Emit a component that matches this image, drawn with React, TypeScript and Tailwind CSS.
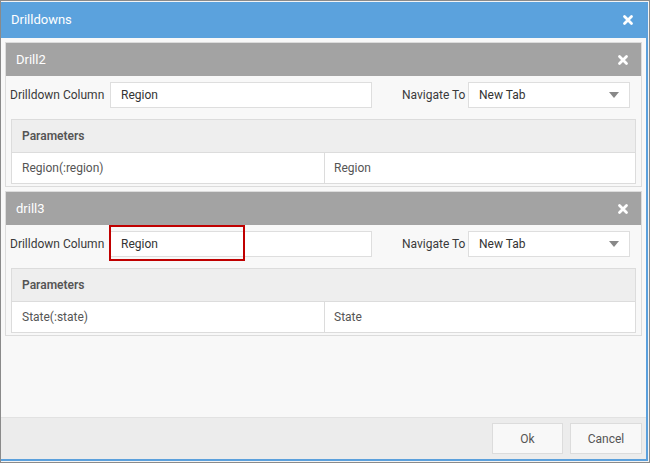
import React from 'react';

type Drill = {
  name: string;
  column: string;
  param: string;
  value: string;
  highlight?: boolean;
};

const drills: Drill[] = [
  { name: 'Drill2', column: 'Region', param: 'Region(:region)', value: 'Region' },
  { name: 'drill3', column: 'Region', param: 'State(:state)', value: 'State', highlight: true },
];

function CloseIcon({ className }: { className?: string }) {
  return (
    <svg viewBox="0 0 12 12" className={className} fill="none">
      <path d="M2.5 2.5 L9.5 9.5 M9.5 2.5 L2.5 9.5" stroke="currentColor" strokeWidth="2.8" strokeLinecap="round" />
    </svg>
  );
}

function DrillPanel({ drill }: { drill: Drill }) {
  return (
    <div className="border border-[#dcdcdc] bg-[#f8f8f8]">
      <div className="h-[33px] bg-[#a3a3a3] flex items-center justify-between pl-[10px] pr-[12px]">
        <span className="text-white text-[13px]">{drill.name}</span>
        <CloseIcon className="w-[12px] h-[12px] text-white" />
      </div>
      <div className="px-[4px] pt-[5px] pb-[2px]">
        <div className="flex items-center h-[28px]">
          <span className="w-[100px] text-[12px] text-[#3a3a3a]">Drilldown Column</span>
          <div className="relative w-[262px] h-[26px] bg-white border border-[#dedede] flex items-center pl-[10px]">
            <span className="text-[12px] text-[#333]">{drill.column}</span>
            {drill.highlight && (
              <div className="absolute left-[-2px] top-[-7px] w-[136px] h-[36px] border-2 border-[#c00000]" />
            )}
          </div>
          <span className="ml-[30px] w-[66px] text-[12px] text-[#3a3a3a]">Navigate To</span>
          <div className="w-[162px] h-[26px] bg-white border border-[#dedede] flex items-center justify-between pl-[10px] pr-[10px]">
            <span className="text-[12px] text-[#333]">New Tab</span>
            <svg viewBox="0 0 10 6" className="w-[10px] h-[6px]">
              <path d="M0 0 L10 0 L5 6 Z" fill="#888" />
            </svg>
          </div>
        </div>
        <div className="mt-[10px] mx-[1px] border border-[#dcdcdc]">
          <div className="h-[33px] bg-[#eeeeee] border-b border-[#dcdcdc] flex items-center pl-[10px]">
            <span className="text-[12px] font-semibold text-[#555]">Parameters</span>
          </div>
          <div className="h-[30px] bg-white grid grid-cols-[313px_1fr]">
            <div className="flex items-center pl-[10px] border-r border-[#dcdcdc]">
              <span className="text-[12px] text-[#555]">{drill.param}</span>
            </div>
            <div className="flex items-center pl-[9px]">
              <span className="text-[12px] text-[#555]">{drill.value}</span>
            </div>
          </div>
        </div>
      </div>
    </div>
  );
}

export default function App() {
  return (
    <div
      className="w-[650px] h-[463px] border border-[#8a8a8a] bg-[#f4f4f4] pt-[1px] pr-[1px] pb-[1px]"
      style={{ fontFamily: 'Roboto, "Liberation Sans", Arial, sans-serif' }}
    >
      <div className="h-full flex flex-col border-r-2 border-b-2 border-[#5ba0dc] bg-[#f8f8f8]">
        <div className="h-[36px] bg-[#5ba2dd] flex items-center justify-between pl-[10px] pr-[12px] shrink-0">
          <span className="text-white text-[13px]">Drilldowns</span>
          <CloseIcon className="w-[12px] h-[12px] text-white" />
        </div>
        <div className="flex-1 px-[4px] pt-[4px] flex flex-col gap-[4px]">
          {drills.map((d) => (
            <DrillPanel key={d.name} drill={d} />
          ))}
        </div>
        <div className="h-[42px] bg-[#ececec] border-t border-[#e2e2e2] flex items-center justify-end gap-[7px] pr-[4px] shrink-0">
          <button className="w-[71px] h-[31px] bg-[#f8f8f8] border border-[#dcdcdc] text-[12px] text-[#555]">Ok</button>
          <button className="w-[72px] h-[31px] bg-[#f8f8f8] border border-[#dcdcdc] text-[12px] text-[#555]">Cancel</button>
        </div>
      </div>
    </div>
  );
}
